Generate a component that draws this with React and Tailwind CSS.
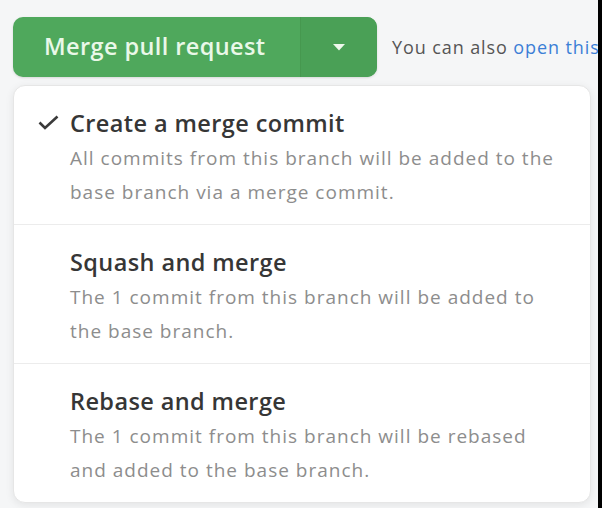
import React from "react";

const options = [
  {
    title: "Create a merge commit",
    desc: ["All commits from this branch will be added to the", "base branch via a merge commit."],
    checked: true,
  },
  {
    title: "Squash and merge",
    desc: ["The 1 commit from this branch will be added to", "the base branch."],
  },
  {
    title: "Rebase and merge",
    desc: ["The 1 commit from this branch will be rebased", "and added to the base branch."],
  },
];

const App = () => {
  return (
    <div
      className="relative w-[602px] h-[508px] overflow-hidden bg-[#f5f6f7] pl-[13px] pt-[17px]"
      style={{ fontFamily: '"Open Sans", "Noto Sans", sans-serif' }}
    >
      {/* right edge strip */}
      <div className="absolute right-0 top-0 w-[4px] h-full bg-black z-10" />

      <div className="flex items-center whitespace-nowrap">
        <div className="flex shrink-0 h-[60px] w-[364px] rounded-[10px] overflow-hidden bg-[#4fa85c] shadow-sm">
          <button className="w-[287px] text-left pl-[31px] text-[23.5px] font-semibold text-[#eaf8e8] tracking-[0.4px]">
            Merge pull request
          </button>
          <button className="w-[77px] flex items-center justify-center border-l border-[#46984f] bg-[#4aa056]">
            <svg width="12" height="7" viewBox="0 0 12 7">
              <path d="M0 0h12L6 6.5z" fill="#eef8ec" />
            </svg>
          </button>
        </div>
        <p className="ml-[15px] text-[18px] tracking-[0.9px] text-[#555]">
          You can also <span className="text-[#3b7fd6]">open this in GitHub Desktop</span>
        </p>
      </div>

      <div className="mt-[8px] w-[578px] bg-white rounded-[12px] border border-[#e6e6e6] shadow-[0_2px_8px_rgba(0,0,0,0.08)]">
        {options.map((opt, i) => (
          <div
            key={opt.title}
            className={`flex pt-[22px] pb-[15px] ${i > 0 ? "border-t border-[#ececec]" : ""}`}
          >
            <div className="w-[56px] shrink-0 flex justify-end pr-[11px] pt-[7px]">
              {opt.checked && (
                <svg width="21" height="15" viewBox="0 0 21 15">
                  <path d="M1.5 7.5l5.5 5.5L19.5 1.5" fill="none" stroke="#3a3a3a" strokeWidth="2.6" />
                </svg>
              )}
            </div>
            <div className="whitespace-nowrap">
              <div className="text-[23.5px] leading-[30px] font-semibold text-[#363636] tracking-[0.4px]">
                {opt.title}
              </div>
              <div className="mt-[3px] text-[19px] leading-[34px] text-[#8d8d8d] tracking-[1px]">
                {opt.desc.map((d) => (
                  <div key={d}>{d}</div>
                ))}
              </div>
            </div>
          </div>
        ))}
      </div>
    </div>
  );
};

export default App;
